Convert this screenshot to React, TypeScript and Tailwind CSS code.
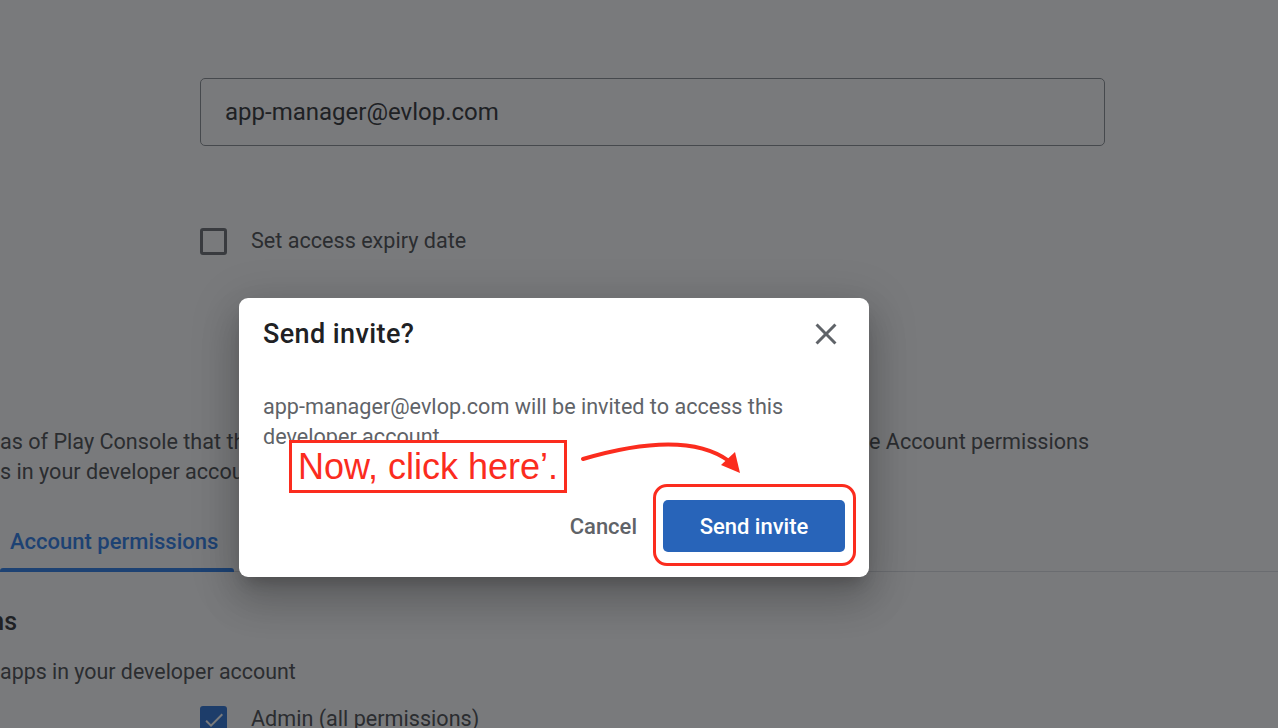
import React from 'react';

function CloseIcon() {
  return (
    <svg viewBox="0 0 24 24" className="w-[36px] h-[36px] fill-[#5f6368]">
      <path d="M19 6.41L17.59 5 12 10.59 6.41 5 5 6.41 10.59 12 5 17.59 6.41 19 12 13.41 17.59 19 19 17.59 13.41 12z" />
    </svg>
  );
}

function CheckBox({ checked }: { checked?: boolean }) {
  if (checked) {
    return (
      <div className="w-[27px] h-[27px] rounded-[3px] bg-[#1a66d2] flex items-center justify-center shrink-0">
        <svg viewBox="0 0 24 24" className="w-[24px] h-[24px] fill-white">
          <path d="M9 16.17L4.83 12l-1.42 1.41L9 19 21 7l-1.41-1.41z" />
        </svg>
      </div>
    );
  }
  return <div className="w-[27px] h-[27px] rounded-[3px] border-[3px] border-[#5f6368] shrink-0" />;
}

export default function App() {
  return (
    <div className="relative h-[728px] w-[1278px] overflow-hidden bg-white font-['Roboto',sans-serif] text-[#3c4043]">
      {/* Page underneath */}
      <div className="pt-[78px]">
        <div className="ml-[200px] w-[905px] h-[68px] border border-[#80868b] rounded-[5px] flex items-center pl-[24px] text-[24px] text-[#202124]">
          app-manager@evlop.com
        </div>

        <div className="mt-[82px] ml-[200px] flex items-center gap-[24px] h-[27px]">
          <CheckBox />
          <span className="text-[21.6px] text-[#3c4043]">Set access expiry date</span>
        </div>

        <div className="mt-[172px] text-[21.6px] leading-[30px] text-[#3c4043] whitespace-nowrap">
          <div className="flex">
            <span className="w-[869px] overflow-hidden">
              <span className="inline-flex w-0 justify-end">Choose the are</span>as of Play Console that this user can access, or manage them in th
            </span>
            <span>e Account permissions</span>
          </div>
          <div>
            <span className="inline-flex w-0 justify-end">Permissions apply to all app</span>s in your developer account.
          </div>
        </div>

        <div className="mt-[25px] flex h-[60px] border-b border-[#dadce0]">
          <div className="relative w-[234px] flex items-center pl-[10px] text-[22px] font-medium text-[#1a73e8] whitespace-nowrap">
            Account permissions
            <div className="absolute left-0 right-0 bottom-[-1px] h-[4px] rounded-t-[3px] bg-[#1a73e8]" />
          </div>
        </div>

        <div className="mt-[36px] flex h-[28px] items-center">
          <div className="w-[17px] flex justify-end whitespace-nowrap text-[25px] font-medium text-[#202124]">
            Account permissions
          </div>
        </div>

        <div className="mt-[22px] flex h-[28px] items-center whitespace-nowrap text-[21.4px] text-[#3c4043]">
          <span className="inline-flex w-0 justify-end">Applies to all </span>apps in your developer account
        </div>

        <div className="mt-[20px] ml-[200px] flex items-center gap-[24px] h-[27px]">
          <CheckBox checked />
          <span className="text-[21.6px] text-[#3c4043]">Admin (all permissions)</span>
        </div>
      </div>

      {/* Scrim */}
      <div className="absolute inset-0 bg-[rgba(32,33,36,0.6)]">
        {/* Dialog */}
        <div className="absolute left-[239px] top-[298px] w-[630px] h-[279px] rounded-[9px] bg-white shadow-[0_11px_15px_-7px_rgba(0,0,0,0.2),0_24px_38px_3px_rgba(0,0,0,0.14),0_9px_46px_8px_rgba(0,0,0,0.12)] flex flex-col">
          <div className="flex items-center justify-between pl-[24px] pr-[25px] h-[72px]">
            <h2 className="text-[27px] tracking-[0.4px] font-medium text-[#202124]">Send invite?</h2>
            <CloseIcon />
          </div>
          <p className="mt-[22px] px-[24px] text-[21.6px] leading-[30px] text-[#5f6368]">
            app-manager@evlop.com will be invited to access this<br />developer account
          </p>
          <div className="mt-auto mb-[25px] mr-[24px] flex justify-end items-center gap-[10px]">
            <button className="px-[16px] h-[52px] text-[22px] font-medium text-[#5f6368]">Cancel</button>
            <button className="w-[182px] h-[52px] rounded-[5px] bg-[#2864b9] text-[22px] font-medium text-white">Send invite</button>
          </div>

          {/* Annotation */}
          <div className="absolute left-[50px] top-[142px] w-[278px] h-[53px] border-[3px] border-[#fb2c1e] bg-white flex items-center pl-[6px]">
            <span className="font-['Liberation_Sans',Arial,sans-serif] text-[36px] leading-none text-[#fb2c1e] whitespace-nowrap">Now, click here’.</span>
          </div>
          <svg className="absolute left-[336px] top-[137px]" width="175" height="45" viewBox="0 0 175 45" fill="none">
            <path d="M8 24 Q 110 -6 154 26" stroke="#fb2c1e" strokeWidth="4" strokeLinecap="round" />
            <polygon points="165,38 146,30 160,17" fill="#fb2c1e" />
          </svg>
          <div className="absolute left-[414px] top-[186px] w-[203px] h-[82px] rounded-[14px] border-[3px] border-[#fb2c1e]" />
        </div>
      </div>
    </div>
  );
}
